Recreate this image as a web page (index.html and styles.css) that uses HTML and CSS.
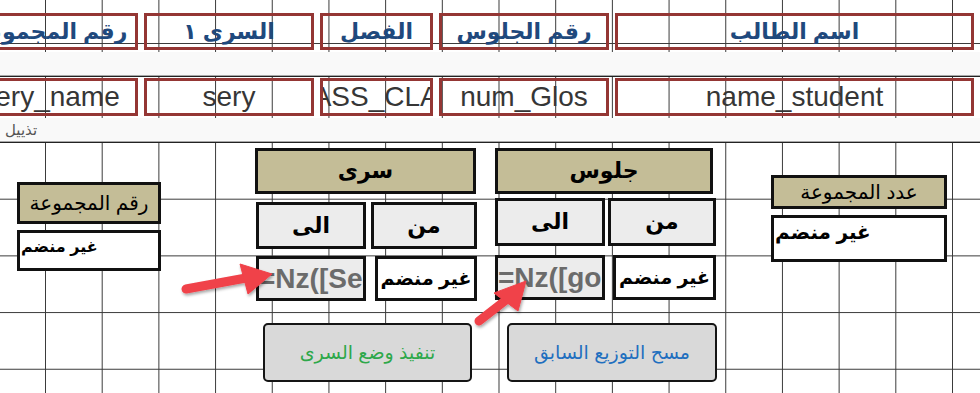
FILE: index.html
```html
<!DOCTYPE html>
<html>
<head>
    <meta charset="UTF-8">
    <title>توزيع السرى</title>
    <link rel="stylesheet" href="styles.css">
</head>
<body>
    <div class="design">
        <!-- Page header section -->
        <div class="sec sec-head">
            <div class="row">
                <div class="fld w-grp"><span class="lbl">رقم المجموعة</span></div>
                <div class="fld w-sery"><span class="lbl">السرى ١</span></div>
                <div class="fld w-class"><span class="lbl">الفصل</span></div>
                <div class="fld w-glos"><span class="lbl">رقم الجلوس</span></div>
                <div class="fld w-name"><span class="lbl">اسم الطالب</span></div>
            </div>
        </div>
        <div class="bar"></div>

        <!-- Detail section -->
        <div class="sec sec-detail">
            <div class="row">
                <div class="fld val w-grp"><span>sery_name</span></div>
                <div class="fld val w-sery"><span>sery</span></div>
                <div class="fld val w-class"><span>CLASS_CLASS</span></div>
                <div class="fld val w-glos"><span>num_Glos</span></div>
                <div class="fld val w-name"><span>name_student</span></div>
            </div>
        </div>
        <div class="bar"><span class="bar-label">تذييل</span></div>

        <!-- Footer section -->
        <div class="sec sec-foot">
            <div class="grp grp-a">
                <div class="ctl khaki thin grp-a-title">رقم المجموعة</div>
                <div class="ctl white top grp-a-val">غير منضم</div>
            </div>

            <div class="grp grp-b">
                <div class="ctl khaki grp-b-title">سرى</div>
                <div class="pair b-row1">
                    <div class="ctl gray b-to">الى</div>
                    <div class="ctl gray b-from">من</div>
                </div>
                <div class="pair b-row2">
                    <div class="ctl gray expr b-to">=Nz([Sery_from])</div>
                    <div class="ctl white small b-from2">غير منضم</div>
                </div>
                <button class="btn btn-green b-btn">تنفيذ وضع السرى</button>
            </div>

            <div class="grp grp-c">
                <div class="ctl khaki grp-c-title">جلوس</div>
                <div class="pair c-row1">
                    <div class="ctl gray c-to">الى</div>
                    <div class="ctl gray c-from">من</div>
                </div>
                <div class="pair c-row2">
                    <div class="ctl gray expr c-to">=Nz([go'])</div>
                    <div class="ctl white small c-from2">غير منضم</div>
                </div>
                <button class="btn btn-blue c-btn">مسح التوزيع السابق</button>
            </div>

            <div class="grp grp-d">
                <div class="ctl khaki thin grp-d-title">عدد المجموعة</div>
                <div class="ctl white top grp-d-val">غير منضم</div>
            </div>
        </div>

        <!-- callout arrows drawn over the form -->
        <svg class="arrows" width="980" height="393" viewBox="0 0 980 393">
            <defs>
                <filter id="shadow" x="-20%" y="-20%" width="140%" height="140%">
                    <feDropShadow dx="1" dy="2" stdDeviation="1.5" flood-color="#000" flood-opacity="0.35"/>
                </filter>
            </defs>
            <g fill="#f0424a" stroke="#f0424a" filter="url(#shadow)">
                <line x1="186" y1="289" x2="246" y2="278" stroke-width="9" stroke-linecap="round"/>
                <polygon points="240,264 272,274 248,294" stroke-width="1" stroke-linejoin="round"/>
                <line x1="479" y1="321" x2="506" y2="300" stroke-width="9" stroke-linecap="round"/>
                <polygon points="494,293 526,281 518,311" stroke-width="1" stroke-linejoin="round"/>
            </g>
        </svg>
    </div>
</body>
</html>
```

FILE: styles.css
```css
body {
    margin: 0;
    background-color: #ffffff;
    font-family: "Liberation Sans", "DejaVu Sans", sans-serif;
    overflow: hidden;
}
.design {
    position: relative;
    width: 980px;
    height: 393px;
    overflow: hidden;
}
.sec {
    background-color: #ffffff;
    background-image:
        linear-gradient(to right, #3a3a3a 1px, transparent 1px),
        linear-gradient(to bottom, #3a3a3a 1px, transparent 1px);
    background-size: 56.7px 56.7px;
}
.sec-head {
    height: 52px;
    background-position: 45px 43px;
    padding-top: 13px;
    box-sizing: border-box;
}
.sec-detail {
    height: 42px;
    border-top: 1px solid #222;
    box-sizing: border-box;
    background-image: linear-gradient(to right, #3a3a3a 1px, transparent 1px);
    background-position: 45px 0;
    padding-top: 1px;
}
.sec-foot {
    height: 253px;
    border-top: 1px solid #222;
    box-sizing: border-box;
    background-position: 45px -1px;
    display: flex;
    align-items: flex-start;
}
.bar {
    height: 23px;
    background-color: #f9f9f9;
    border-bottom: 1px solid #a8a8a8;
    position: relative;
}
.bar-label {
    position: absolute;
    left: 5px;
    top: 3px;
    font-size: 15px;
    color: #555;
}
.row {
    display: flex;
    gap: 6px;
    margin-left: -37px;
}
.fld {
    height: 37px;
    border: 3px solid #943634;
    box-sizing: border-box;
    display: flex;
    align-items: center;
    justify-content: center;
    overflow: hidden;
    white-space: nowrap;
    flex-shrink: 0;
}
.fld.val {
    height: 38px;
}
.lbl {
    color: #1f497d;
    font-weight: bold;
    font-size: 22px;
}
.val span {
    color: #363636;
    font-size: 28px;
}
.w-grp { width: 175px; }
.w-sery { width: 170px; }
.w-class { width: 113px; }
.w-glos { width: 170px; }
.w-name { width: 359px; }

/* footer controls */
.grp {
    flex-shrink: 0;
}
.ctl {
    border: 3px solid #111;
    box-sizing: border-box;
    display: flex;
    align-items: center;
    justify-content: center;
    font-size: 22px;
    font-weight: bold;
    color: #000;
    overflow: hidden;
    white-space: nowrap;
}
.khaki { background-color: #c4bd97; }
.gray { background-color: #ececec; }
.white { background-color: #ffffff; }
.thin {
    font-weight: normal;
    font-size: 20px;
}
.small {
    font-size: 19px;
}
.top {
    align-items: flex-start;
    justify-content: flex-start;
    padding: 2px 0 0 1px;
    font-size: 20px;
}
.expr {
    justify-content: flex-start;
    color: #6b6b6b;
    font-size: 28px;
    padding-left: 0;
}
.pair {
    display: flex;
}

.grp-a { margin: 39px 0 0 17px; width: 144px; }
.grp-a-title { height: 42px; }
.grp-a-val { height: 41px; margin-top: 6px; font-size: 16px; padding-top: 4px; }

.grp-b { margin: 5px 0 0 94px; width: 222px; }
.grp-b-title { width: 221px; height: 46px; }
.b-row1 { margin: 8px 0 0 1px; gap: 5px; }
.b-row1 .ctl { height: 47px; }
.b-to { width: 110px; }
.b-from { width: 106px; }
.b-row2 { margin: 7px 0 0 1px; gap: 9px; }
.b-row2 .ctl { height: 45px; }
.b-from2 { width: 102px; }
.b-btn { margin: 22px 0 0 8px; width: 209px; }

.grp-c { margin: 5px 0 0 18px; width: 221px; }
.grp-c-title { width: 218px; height: 46px; }
.c-row1 { margin-top: 4px; gap: 3px; }
.c-row1 .ctl { height: 48px; }
.c-to { width: 110px; }
.c-from { width: 108px; }
.c-row2 { margin-top: 9px; gap: 8px; }
.c-row2 .ctl { height: 45px; }
.c-from2 { width: 103px; }
.c-btn { margin: 23px 0 0 12px; width: 210px; }

.grp-d { margin: 32px 0 0 55px; width: 176px; }
.grp-d-title { height: 34px; }
.grp-d-val { height: 47px; margin-top: 6px; }

.btn {
    display: block;
    height: 59px;
    background-color: #d9d9d9;
    border: 2px solid #151515;
    border-radius: 5px;
    font-family: "Liberation Sans", "DejaVu Sans", sans-serif;
    font-size: 19px;
}
.btn-green { color: #2ea84a; }
.btn-blue { color: #1f6fbf; }

.arrows {
    position: absolute;
    left: 0;
    top: 0;
    pointer-events: none;
}
```
